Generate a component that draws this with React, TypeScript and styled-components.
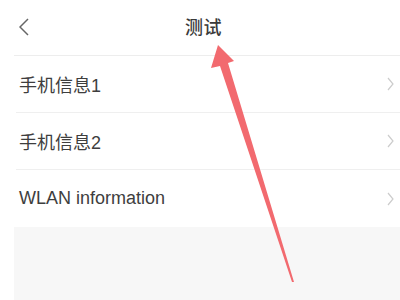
import styled, { createGlobalStyle } from 'styled-components';

const GlobalStyle = createGlobalStyle`
  html, body {
    margin: 0;
    padding: 0;
    background: #ffffff;
  }
  body {
    font-family: "Liberation Sans", "Noto Sans CJK SC", sans-serif;
  }
`;

const Screen = styled.div`
  position: relative;
  width: 400px;
  height: 300px;
  overflow: hidden;
  display: flex;
  flex-direction: column;
  background: #ffffff;
`;

const Header = styled.div`
  display: grid;
  grid-template-columns: 60px 1fr 60px;
  align-items: center;
  height: 56px;
  margin-left: 14px;
  padding-bottom: 3px;
  border-bottom: 1px solid #ededed;
  box-sizing: border-box;
`;

const BackButton = styled.div`
  display: flex;
  align-items: center;
  padding-left: 5px;
  padding-top: 2px;
`;

const Title = styled.div`
  text-align: center;
  font-family: "Noto Sans CJK SC", sans-serif;
  font-size: 18px;
  font-weight: 500;
  color: #3a3a3a;
  padding-right: 7px;
  letter-spacing: 0.5px;
`;

const List = styled.div`
  display: flex;
  flex-direction: column;
`;

const Row = styled.div<{ $last?: boolean }>`
  display: flex;
  align-items: center;
  justify-content: space-between;
  height: 57px;
  margin-left: 16px;
  padding-left: 3px;
  padding-right: 6px;
  box-sizing: border-box;
  border-bottom: ${(p) => (p.$last ? 'none' : '1px solid #efefef')};
`;

const Label = styled.span`
  font-size: 18px;
  color: #3e3e3e;
  font-family: "Liberation Sans", "Noto Sans CJK SC", sans-serif;
`;

const Footer = styled.div`
  flex: 1;
  margin-left: 14px;
  background: #f7f7f7;
`;

const ArrowLayer = styled.svg`
  position: absolute;
  left: 0;
  top: 0;
  pointer-events: none;
`;

const Chevron = ({ dir, color, w, h, sw }: { dir: 'left' | 'right'; color: string; w: number; h: number; sw: number }) => (
  <svg width={w} height={h} viewBox={`0 0 ${w} ${h}`}>
    {dir === 'left' ? (
      <polyline points={`${w - 1},1 1,${h / 2} ${w - 1},${h - 1}`} fill="none" stroke={color} strokeWidth={sw} />
    ) : (
      <polyline points={`1,1 ${w - 1},${h / 2} 1,${h - 1}`} fill="none" stroke={color} strokeWidth={sw} />
    )}
  </svg>
);

const items = ['手机信息1', '手机信息2', 'WLAN information'];

export default function App() {
  return (
    <>
      <GlobalStyle />
      <Screen>
        <Header>
          <BackButton>
            <Chevron dir="left" color="#666666" w={10} h={18} sw={1.5} />
          </BackButton>
          <Title>测试</Title>
          <div />
        </Header>
        <List>
          {items.map((t, i) => (
            <Row key={t} $last={i === items.length - 1}>
              <Label>{t}</Label>
              <Chevron dir="right" color="#cccccc" w={7} h={14} sw={1.2} />
            </Row>
          ))}
        </List>
        <Footer />
        <ArrowLayer width={400} height={300} viewBox="0 0 400 300">
          <polygon
            points="218,45 234,61 228,63 294,282 292,282 220,66 211,68"
            fill="#f26a6f"
          />
        </ArrowLayer>
      </Screen>
    </>
  );
}
